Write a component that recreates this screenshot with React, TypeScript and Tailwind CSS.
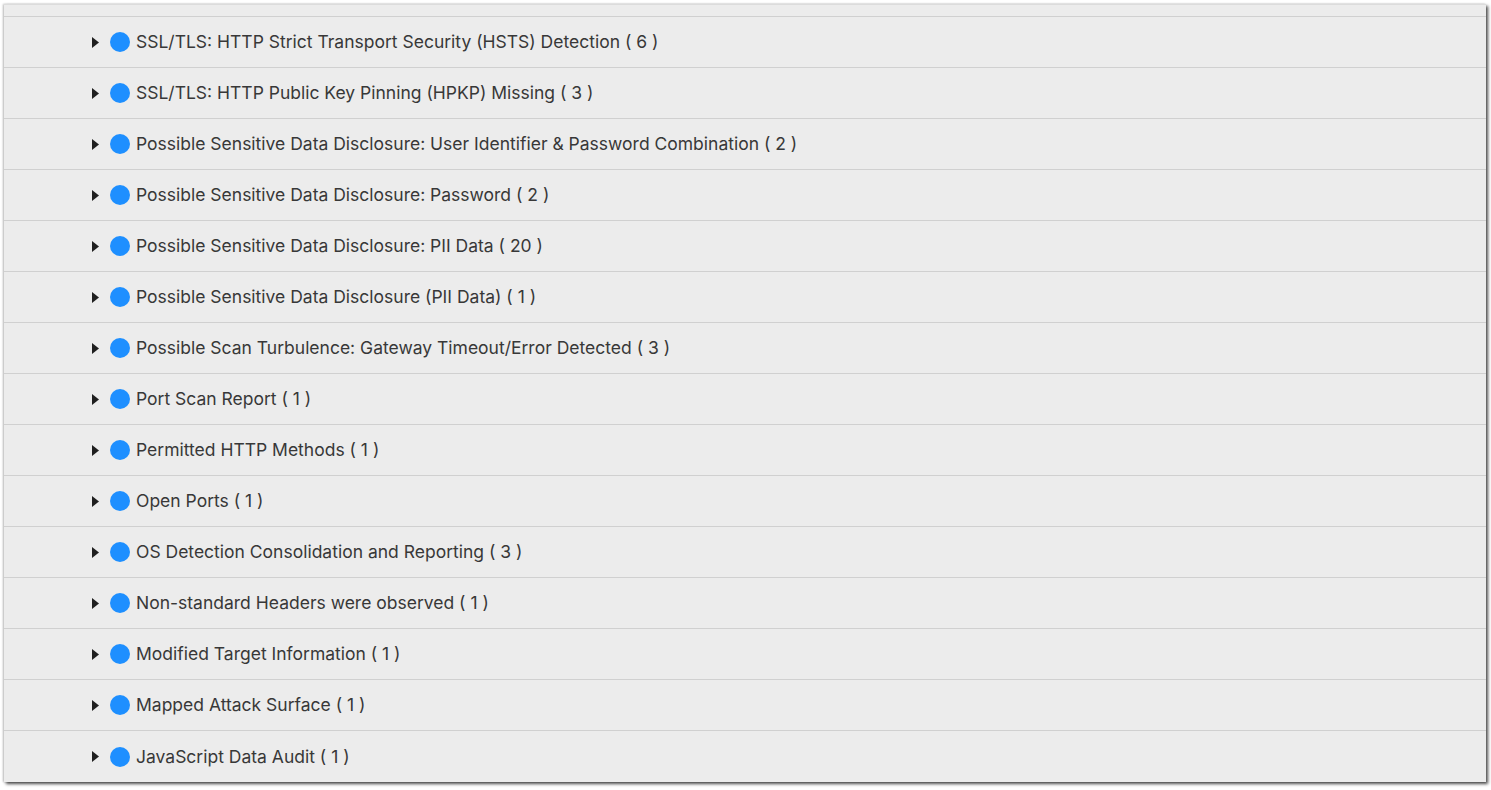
import React from "react";

const rows = [
  "SSL/TLS: HTTP Strict Transport Security (HSTS) Detection ( 6 )",
  "SSL/TLS: HTTP Public Key Pinning (HPKP) Missing ( 3 )",
  "Possible Sensitive Data Disclosure: User Identifier & Password Combination ( 2 )",
  "Possible Sensitive Data Disclosure: Password ( 2 )",
  "Possible Sensitive Data Disclosure: PII Data ( 20 )",
  "Possible Sensitive Data Disclosure (PII Data) ( 1 )",
  "Possible Scan Turbulence: Gateway Timeout/Error Detected ( 3 )",
  "Port Scan Report ( 1 )",
  "Permitted HTTP Methods ( 1 )",
  "Open Ports ( 1 )",
  "OS Detection Consolidation and Reporting ( 3 )",
  "Non-standard Headers were observed ( 1 )",
  "Modified Target Information ( 1 )",
  "Mapped Attack Surface ( 1 )",
  "JavaScript Data Audit ( 1 )",
];

export default function App() {
  return (
    <div className="w-[1491px] h-[790px] bg-white pt-[4px] pl-[4px]" style={{ fontFamily: "Inter, 'Noto Sans', sans-serif" }}>
      <div className="w-[1482px] bg-[#ececec] border-t border-[#dcdcdc] shadow-[2px_2px_3px_rgba(0,0,0,0.7),-1px_0_2px_rgba(0,0,0,0.25)]">
        <div className="h-[12px] border-b border-[#d0d0d0]" />
        {rows.map((r, i) => (
          <div
            key={i}
            className={`h-[51px] flex items-center pl-[88px] ${i < rows.length - 1 ? "border-b border-[#d0d0d0]" : ""}`}
          >
            <svg width="7" height="11" viewBox="0 0 7 11" className="mr-[11px]">
              <path d="M0 0 L7 5.5 L0 11 Z" fill="#1f1f1f" />
            </svg>
            <span className="w-[20px] h-[20px] rounded-full bg-[#1e8fff] mr-[6px] shrink-0" />
            <span className="text-[17.5px] text-[#383838] leading-none">{r}</span>
          </div>
        ))}
      </div>
    </div>
  );
}
